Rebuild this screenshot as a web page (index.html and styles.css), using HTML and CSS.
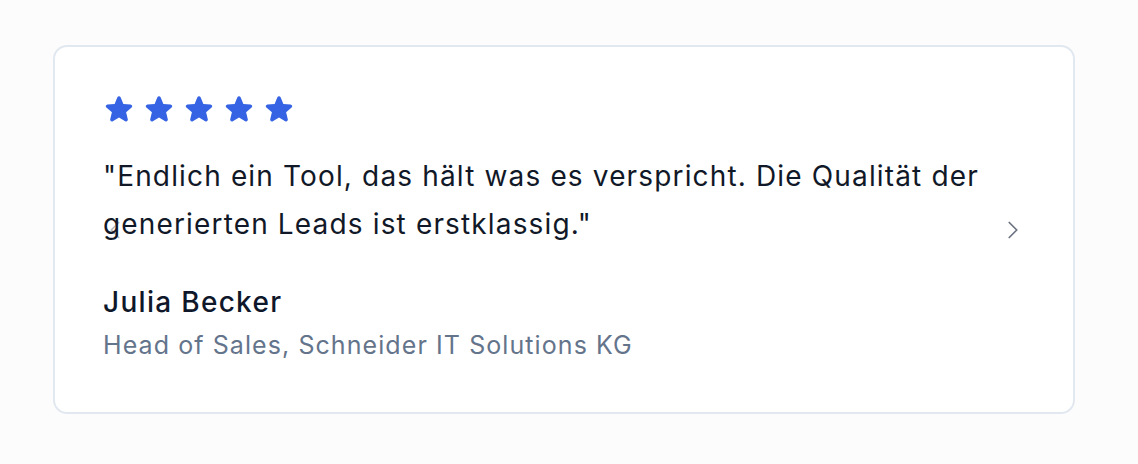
FILE: index.html
```html
<!DOCTYPE html>
<html lang="de">
<head>
<meta charset="utf-8">
<link rel="stylesheet" href="styles.css">
</head>
<body>
<main class="page">
  <section class="card">
    <div class="stars">
      <svg class="star" viewBox="0 0 24 24"><path d="M10.788 3.21c.448-1.077 1.976-1.077 2.424 0l2.082 5.006 5.404.434c1.164.093 1.636 1.545.749 2.305l-4.117 3.527 1.257 5.273c.271 1.136-.964 2.033-1.96 1.425L12 18.354 7.373 21.18c-.996.608-2.231-.29-1.96-1.425l1.257-5.273-4.117-3.527c-.887-.76-.415-2.212.749-2.305l5.404-.434 2.082-5.005Z"/></svg>
      <svg class="star" viewBox="0 0 24 24"><path d="M10.788 3.21c.448-1.077 1.976-1.077 2.424 0l2.082 5.006 5.404.434c1.164.093 1.636 1.545.749 2.305l-4.117 3.527 1.257 5.273c.271 1.136-.964 2.033-1.96 1.425L12 18.354 7.373 21.18c-.996.608-2.231-.29-1.96-1.425l1.257-5.273-4.117-3.527c-.887-.76-.415-2.212.749-2.305l5.404-.434 2.082-5.005Z"/></svg>
      <svg class="star" viewBox="0 0 24 24"><path d="M10.788 3.21c.448-1.077 1.976-1.077 2.424 0l2.082 5.006 5.404.434c1.164.093 1.636 1.545.749 2.305l-4.117 3.527 1.257 5.273c.271 1.136-.964 2.033-1.96 1.425L12 18.354 7.373 21.18c-.996.608-2.231-.29-1.96-1.425l1.257-5.273-4.117-3.527c-.887-.76-.415-2.212.749-2.305l5.404-.434 2.082-5.005Z"/></svg>
      <svg class="star" viewBox="0 0 24 24"><path d="M10.788 3.21c.448-1.077 1.976-1.077 2.424 0l2.082 5.006 5.404.434c1.164.093 1.636 1.545.749 2.305l-4.117 3.527 1.257 5.273c.271 1.136-.964 2.033-1.96 1.425L12 18.354 7.373 21.18c-.996.608-2.231-.29-1.96-1.425l1.257-5.273-4.117-3.527c-.887-.76-.415-2.212.749-2.305l5.404-.434 2.082-5.005Z"/></svg>
      <svg class="star" viewBox="0 0 24 24"><path d="M10.788 3.21c.448-1.077 1.976-1.077 2.424 0l2.082 5.006 5.404.434c1.164.093 1.636 1.545.749 2.305l-4.117 3.527 1.257 5.273c.271 1.136-.964 2.033-1.96 1.425L12 18.354 7.373 21.18c-.996.608-2.231-.29-1.96-1.425l1.257-5.273-4.117-3.527c-.887-.76-.415-2.212.749-2.305l5.404-.434 2.082-5.005Z"/></svg>
    </div>
    <div class="nav">
      <button class="nav-btn prev" aria-label="Zurück"><svg viewBox="0 0 24 24"><path d="M15.75 19.5 8.25 12l7.5-7.5"/></svg></button>
      <button class="nav-btn next" aria-label="Weiter"><svg viewBox="0 0 24 24"><path d="m8.25 4.5 7.5 7.5-7.5 7.5"/></svg></button>
    </div>
    <blockquote class="quote">"Endlich ein Tool, das hält was es verspricht. Die Qualität der generierten Leads ist erstklassig."</blockquote>
    <div class="author">
      <p class="name">Julia Becker</p>
      <p class="role">Head of Sales, Schneider IT Solutions KG</p>
    </div>
  </section>
</main>
</body>
</html>
```
FILE: styles.css
```css
* { box-sizing: border-box; }
html, body { margin: 0; padding: 0; }
body {
  background: #fcfcfd;
  font-family: Inter, "Noto Sans", sans-serif;
  color: #0f172a;
}
.page {
  padding: 45px 63px 50px 53px;
}
.card {
  position: relative;
  background: #fff;
  border: 2px solid #e2e8f0;
  border-radius: 14px;
  padding: 46px 48px 48px 48px;
  height: 369px;
}
.stars {
  display: flex;
  gap: 8px;
}
.star {
  width: 32px;
  height: 32px;
  fill: #3563e3;
}
.nav {
  position: absolute;
  inset: 0 48px;
  display: flex;
  align-items: center;
  justify-content: space-between;
  pointer-events: none;
}
.nav-btn {
  background: none;
  border: 0;
  padding: 0;
  width: 24px;
  height: 24px;
  color: #6b7280;
}
.nav-btn svg {
  width: 24px;
  height: 24px;
  fill: none;
  stroke: currentColor;
  stroke-width: 1.75;
  stroke-linecap: round;
  stroke-linejoin: round;
  display: block;
}
.nav-btn.prev { opacity: 0.5; }
.quote {
  position: relative;
  margin: 27px 0 0 0;
  font-size: 28px;
  line-height: 48px;
  letter-spacing: 1.15px;
  color: #111827;
}
.author { margin-top: 36px; }
.name {
  margin: 0;
  font-size: 28px;
  line-height: 36px;
  font-weight: 500;
  letter-spacing: 1.3px;
  color: #0f172a;
}
.role {
  margin: 9px 0 0 0;
  font-size: 25px;
  line-height: 32px;
  letter-spacing: 1.08px;
  color: #64748b;
}
```
